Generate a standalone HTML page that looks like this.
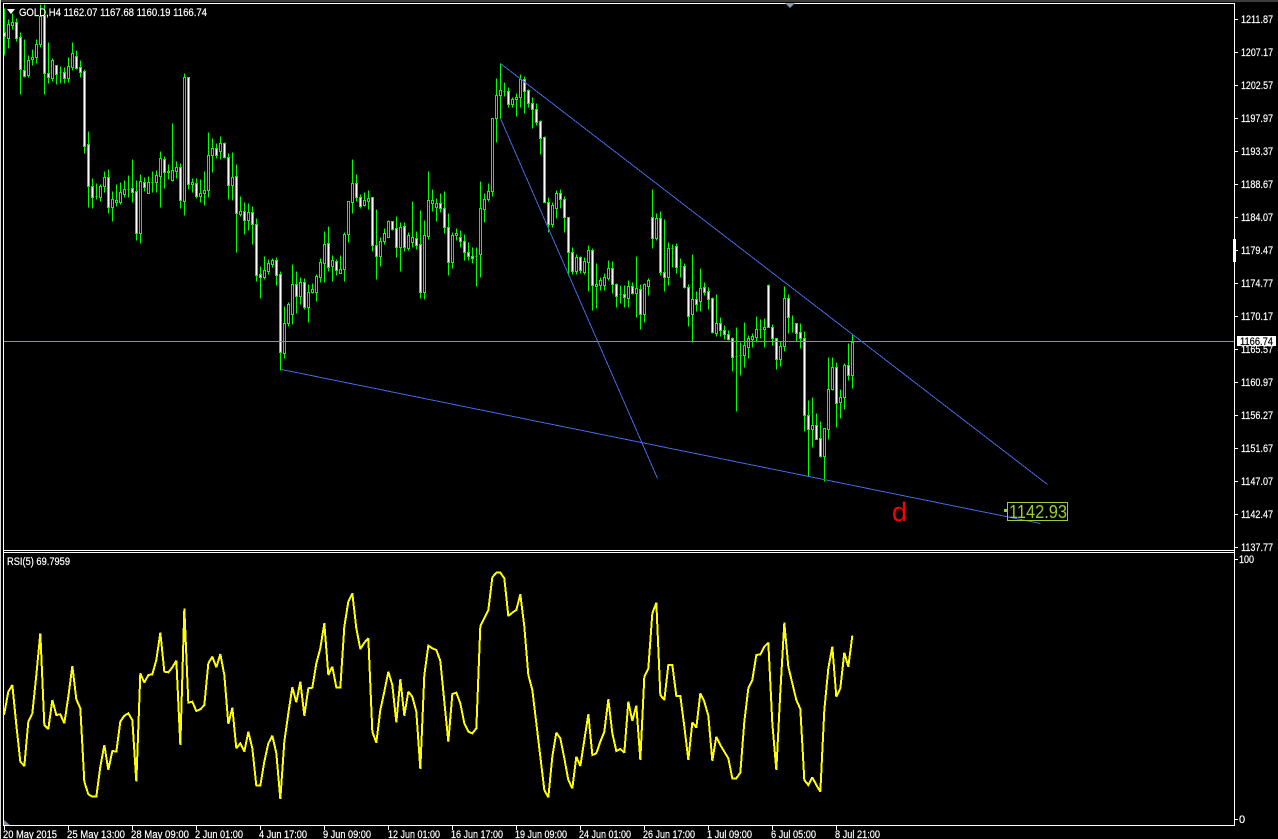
<!DOCTYPE html>
<html lang="en">
<head>
<meta charset="utf-8">
<title>GOLD,H4</title>
<style>
html,body{margin:0;padding:0;background:#000;width:1278px;height:839px;overflow:hidden}
svg{display:block}
text{font-family:"Liberation Sans",sans-serif;font-size:11px;fill:#fff;stroke:#fff;stroke-width:.2}
</style>
</head>
<body>
<svg xmlns="http://www.w3.org/2000/svg" width="1278" height="839" viewBox="0 0 1278 839">
<rect width="1278" height="839" fill="#000"/>
<rect x="0" y="0" width="1278" height="2" fill="#3c3c3c"/>
<rect x="0" y="0" width="1" height="839" fill="#d8d8d8"/>

<g shape-rendering="crispEdges" transform="translate(.5 .5)">
<!-- wicks -->
<path fill="none" stroke="#0f0" d="M4 8V55M8 19V48M12 13V29M16 18V41M20 32V94M24 39V77M28 55V77M32 49V65M36 39V63M40 4V47M44 4V94M48 42V83M52 58V81M56 65V84M60 66V83M64 67V83M68 57V82M72 42V70M76 50V69M80 60V77M84 69V153M88 131V207M92 178V208M96 183V199M100 184V201M104 171V192M108 169V213M112 191V221M116 184V206M120 182V204M124 180V197M128 175V197M132 159V202M136 180V240M140 174V243M144 177V191M148 176V193M152 171V192M156 170V192M160 151V207M164 156V188M168 164V179M172 123V181M176 161V178M180 163V208M184 73V215M188 77V189M192 178V192M196 178V198M200 179V202M204 171V205M208 132V197M212 138V172M216 143V158M220 136V159M224 142V158M228 153V199M232 152V200M236 164V252M240 196V216M244 202V234M248 203V230M252 206V244M256 218V281M260 266V298M264 256V279M268 259V274M272 258V267M276 257V285M280 271V370M284 306V358M288 302V326M292 264V324M296 271V313M300 277V304M304 278V309M308 284V322M312 283V293M316 274V301M320 258V282M324 231V282M328 226V271M332 255V281M336 259V275M340 255V273M344 232V281M348 201V242M352 159V213M356 174V201M360 194V208M364 192V206M368 190V209M372 197V251M376 209V279M380 237V266M384 228V244M388 220V237M392 221V230M396 216V257M400 222V271M404 222V251M408 232V250M412 201V247M416 231V249M420 210V298M424 220V299M428 171V239M432 189V211M436 198V221M440 193V212M444 191V233M448 213V275M452 232V268M456 228V240M460 230V247M464 234V260M468 242V260M472 247V263M476 247V286M480 181V277M484 193V222M488 183V201M492 118V196M496 78V142M500 63V118M504 82V96M508 87V107M512 97V107M516 93V116M520 74V107M524 76V113M528 89V107M532 97V128M536 103V125M540 120V154M544 136V202M548 197V232M552 202V227M556 190V218M560 189V208M564 196V232M568 217V275M572 247V274M576 254V274M580 256V273M584 257V274M588 245V291M592 248V310M596 263V308M600 277V290M604 273V290M608 260V280M612 261V293M616 283V307M620 285V303M624 285V307M628 280V307M632 282V294M636 256V317M640 284V329M644 283V322M648 278V295M652 189V248M656 213V240M660 211V275M664 219V291M668 242V285M672 244V267M676 243V273M680 258V277M684 263V288M688 284V326M692 254V342M696 291V311M700 268V311M704 282V295M708 287V309M712 297V333M716 294V336M720 317V336M724 325V339M728 330V340M732 337V371M736 327V411M740 342V375M744 322V367M748 335V358M752 333V347M756 316V342M760 319V338M764 318V347M768 284V327M772 324V345M776 338V369M780 341V366M784 286V351M788 294V333M792 315V332M796 323V341M800 323V348M804 331V431M808 400V476M812 397V447M816 413V438M820 421V457M824 428V481M828 357V439M832 357V390M836 362V427M840 389V418M844 363V409M848 343V380M852 334V388"/>
<!-- doji -->
<path fill="none" stroke="#0f0" d="M59 72h2M95 196h2M127 189h2M151 182h2M503 91h2M619 294h2M671 248h2M679 266h2M735 356h2M739 355h2M759 329h2M791 323h2M475 256h2"/>
<!-- black bodies -->
<path fill="#000" stroke="#0f0" d="M7 24h2v14h-2zM11 22h2v3h-2zM27 60h2v15h-2zM31 57h2v2h-2zM35 44h2v13h-2zM39 16h2v28h-2zM51 60h2v18h-2zM67 66h2v12h-2zM71 53h2v14h-2zM99 186h2v11h-2zM103 177h2v9h-2zM111 199h2v8h-2zM115 200h2v2h-2zM119 192h2v10h-2zM123 189h2v5h-2zM139 181h2v52h-2zM147 182h2v11h-2zM155 175h2v7h-2zM159 158h2v18h-2zM167 171h2v1h-2zM171 170h2v10h-2zM175 167h2v4h-2zM183 77h2v124h-2zM191 182h2v2h-2zM199 193h2v3h-2zM203 190h2v3h-2zM207 155h2v35h-2zM211 148h2v7h-2zM219 143h2v8h-2zM231 177h2v8h-2zM239 211h2v3h-2zM247 212h2v8h-2zM263 270h2v7h-2zM267 263h2v8h-2zM271 260h2v4h-2zM283 323h2v30h-2zM287 304h2v19h-2zM291 284h2v30h-2zM299 282h2v14h-2zM307 292h2v15h-2zM311 289h2v3h-2zM315 276h2v16h-2zM319 262h2v15h-2zM323 244h2v19h-2zM331 260h2v6h-2zM339 269h2v4h-2zM343 234h2v35h-2zM347 201h2v33h-2zM351 183h2v19h-2zM363 200h2v5h-2zM367 198h2v3h-2zM379 241h2v15h-2zM383 233h2v8h-2zM387 221h2v16h-2zM399 227h2v20h-2zM407 235h2v13h-2zM411 237h2v5h-2zM423 235h2v57h-2zM427 200h2v36h-2zM431 200h2v3h-2zM435 203h2v4h-2zM451 235h2v27h-2zM455 233h2v2h-2zM479 208h2v46h-2zM483 199h2v10h-2zM487 191h2v8h-2zM491 118h2v73h-2zM495 95h2v23h-2zM499 90h2v5h-2zM511 99h2v5h-2zM515 97h2v2h-2zM519 79h2v18h-2zM551 205h2v19h-2zM555 193h2v15h-2zM575 257h2v14h-2zM583 261h2v11h-2zM587 250h2v12h-2zM595 284h2v2h-2zM599 280h2v5h-2zM603 277h2v8h-2zM607 268h2v10h-2zM627 286h2v12h-2zM635 288h2v5h-2zM643 284h2v30h-2zM647 280h2v6h-2zM655 218h2v20h-2zM667 248h2v29h-2zM691 299h2v15h-2zM699 288h2v13h-2zM715 323h2v10h-2zM743 345h2v10h-2zM747 338h2v9h-2zM751 336h2v3h-2zM755 329h2v8h-2zM763 327h2v2h-2zM779 346h2v13h-2zM783 298h2v48h-2zM811 425h2v4h-2zM823 428h2v28h-2zM827 389h2v40h-2zM831 367h2v22h-2zM839 397h2v5h-2zM843 365h2v32h-2zM851 342h2v33h-2z"/>
<!-- white bodies -->
<path fill="#fff" stroke="#0f0" d="M3 32h2v4h-2zM15 22h2v16h-2zM19 37h2v32h-2zM23 70h2v6h-2zM43 15h2v58h-2zM47 73h2v4h-2zM55 65h2v9h-2zM63 72h2v6h-2zM75 56h2v12h-2zM79 67h2v5h-2zM83 71h2v75h-2zM87 144h2v42h-2zM91 186h2v11h-2zM107 177h2v30h-2zM131 188h2v4h-2zM135 191h2v42h-2zM143 182h2v5h-2zM163 159h2v13h-2zM179 167h2v33h-2zM187 77h2v107h-2zM195 183h2v13h-2zM215 148h2v7h-2zM223 143h2v14h-2zM227 157h2v28h-2zM235 176h2v37h-2zM243 211h2v9h-2zM251 212h2v12h-2zM255 224h2v51h-2zM259 274h2v3h-2zM275 260h2v15h-2zM279 274h2v78h-2zM295 284h2v12h-2zM303 282h2v25h-2zM327 243h2v24h-2zM335 261h2v9h-2zM355 183h2v14h-2zM359 197h2v9h-2zM371 197h2v48h-2zM375 245h2v11h-2zM391 221h2v8h-2zM395 228h2v19h-2zM403 226h2v21h-2zM415 238h2v7h-2zM419 244h2v48h-2zM439 203h2v5h-2zM443 208h2v19h-2zM447 227h2v35h-2zM459 237h2v4h-2zM463 241h2v11h-2zM467 252h2v4h-2zM471 256h2v2h-2zM507 91h2v13h-2zM523 79h2v12h-2zM527 90h2v13h-2zM531 103h2v6h-2zM535 109h2v13h-2zM539 121h2v17h-2zM543 137h2v65h-2zM547 202h2v22h-2zM559 193h2v6h-2zM563 199h2v18h-2zM567 217h2v35h-2zM571 252h2v19h-2zM579 257h2v13h-2zM591 250h2v35h-2zM611 268h2v16h-2zM615 284h2v12h-2zM623 294h2v3h-2zM631 286h2v7h-2zM639 289h2v25h-2zM651 217h2v21h-2zM659 218h2v54h-2zM663 272h2v5h-2zM675 246h2v21h-2zM683 266h2v21h-2zM687 287h2v29h-2zM695 299h2v5h-2zM703 287h2v5h-2zM707 291h2v8h-2zM711 298h2v34h-2zM719 323h2v7h-2zM723 330h2v4h-2zM727 334h2v5h-2zM731 338h2v19h-2zM767 285h2v42h-2zM771 327h2v11h-2zM775 338h2v21h-2zM787 298h2v19h-2zM795 323h2v10h-2zM799 332h2v6h-2zM803 338h2v77h-2zM807 415h2v14h-2zM815 425h2v14h-2zM819 438h2v18h-2zM835 367h2v36h-2zM847 365h2v10h-2z"/>
</g>

<!-- current price line -->
<rect x="4" y="341" width="1230" height="1" fill="#8c9099"/>

<!-- trend lines -->
<g shape-rendering="crispEdges" fill="none" stroke="#4169e1" stroke-width="1">
<line x1="500.5" y1="63.5" x2="1047.5" y2="484.5"/>
<line x1="500.5" y1="118.5" x2="657.5" y2="478.5"/>
<line x1="281.5" y1="369.5" x2="1040.5" y2="523.5"/>
</g>

<!-- frame -->
<g fill="#fff" shape-rendering="crispEdges">
<rect x="3" y="3" width="1232" height="1"/>
<rect x="3" y="3" width="1" height="823"/>
<rect x="1234" y="3" width="1" height="823"/>
<rect x="3" y="550" width="1232" height="1"/>
<rect x="3" y="552" width="1232" height="1"/>
<rect x="3" y="825" width="1232" height="1"/>
<rect x="1233" y="239" width="3" height="23"/>
<!-- right ticks -->
<path d="M1235 19h3v1h-3zM1235 52h3v1h-3zM1235 85h3v1h-3zM1235 118h3v1h-3zM1235 151h3v1h-3zM1235 184h3v1h-3zM1235 217h3v1h-3zM1235 250h3v1h-3zM1235 283h3v1h-3zM1235 316h3v1h-3zM1235 349h3v1h-3zM1235 382h3v1h-3zM1235 415h3v1h-3zM1235 448h3v1h-3zM1235 481h3v1h-3zM1235 514h3v1h-3zM1235 547h3v1h-3zM1235 559h3v1h-3zM1235 819h3v1h-3z"/>
<!-- bottom ticks -->
<path d="M4 826h1v4h-1zM68 826h1v4h-1zM132 826h1v4h-1zM196 826h1v4h-1zM260 826h1v4h-1zM324 826h1v4h-1zM388 826h1v4h-1zM452 826h1v4h-1zM516 826h1v4h-1zM580 826h1v4h-1zM644 826h1v4h-1zM708 826h1v4h-1zM772 826h1v4h-1zM836 826h1v4h-1z"/>
</g>

<!-- markers -->
<polygon points="785,3 795,3 790,8" fill="#8a98a8"/>
<polygon points="4,820 4,825 10,825" fill="#778899"/>
<polygon points="7,9 15,9 11,14" fill="#fff"/>

<!-- title -->
<text x="19" y="16" textLength="188" lengthAdjust="spacingAndGlyphs">GOLD,H4 1162.07 1167.68 1160.19 1166.74</text>
<text x="7" y="565" textLength="63" lengthAdjust="spacingAndGlyphs">RSI(5) 69.7959</text>

<!-- price axis -->
<g>
<text x="1241" y="23" textLength="32" lengthAdjust="spacingAndGlyphs">1211.87</text>
<text x="1241" y="56" textLength="32" lengthAdjust="spacingAndGlyphs">1207.17</text>
<text x="1241" y="89" textLength="32" lengthAdjust="spacingAndGlyphs">1202.57</text>
<text x="1241" y="122" textLength="32" lengthAdjust="spacingAndGlyphs">1197.97</text>
<text x="1241" y="155" textLength="32" lengthAdjust="spacingAndGlyphs">1193.37</text>
<text x="1241" y="188" textLength="32" lengthAdjust="spacingAndGlyphs">1188.67</text>
<text x="1241" y="221" textLength="32" lengthAdjust="spacingAndGlyphs">1184.07</text>
<text x="1241" y="254" textLength="32" lengthAdjust="spacingAndGlyphs">1179.47</text>
<text x="1241" y="287" textLength="32" lengthAdjust="spacingAndGlyphs">1174.77</text>
<text x="1241" y="320" textLength="32" lengthAdjust="spacingAndGlyphs">1170.17</text>
<text x="1241" y="353" textLength="32" lengthAdjust="spacingAndGlyphs">1165.57</text>
<text x="1241" y="386" textLength="32" lengthAdjust="spacingAndGlyphs">1160.97</text>
<text x="1241" y="419" textLength="32" lengthAdjust="spacingAndGlyphs">1156.27</text>
<text x="1241" y="452" textLength="32" lengthAdjust="spacingAndGlyphs">1151.67</text>
<text x="1241" y="485" textLength="32" lengthAdjust="spacingAndGlyphs">1147.07</text>
<text x="1241" y="518" textLength="32" lengthAdjust="spacingAndGlyphs">1142.47</text>
<text x="1241" y="551" textLength="32" lengthAdjust="spacingAndGlyphs">1137.77</text>
<text x="1239" y="563" textLength="15" lengthAdjust="spacingAndGlyphs">100</text>
<text x="1239" y="823">0</text>
</g>
<rect x="1237" y="336" width="39" height="10" fill="#fff"/>
<text x="1240" y="345" textLength="33" lengthAdjust="spacingAndGlyphs" style="fill:#000;stroke:#000">1166.74</text>

<!-- time axis -->
<g>
<text x="3" y="838" textLength="54" lengthAdjust="spacingAndGlyphs">20 May 2015</text>
<text x="67" y="838" textLength="58" lengthAdjust="spacingAndGlyphs">25 May 13:00</text>
<text x="131" y="838" textLength="58" lengthAdjust="spacingAndGlyphs">28 May 09:00</text>
<text x="195" y="838" textLength="48" lengthAdjust="spacingAndGlyphs">2 Jun 01:00</text>
<text x="259" y="838" textLength="48" lengthAdjust="spacingAndGlyphs">4 Jun 17:00</text>
<text x="323" y="838" textLength="48" lengthAdjust="spacingAndGlyphs">9 Jun 09:00</text>
<text x="388" y="838" textLength="52" lengthAdjust="spacingAndGlyphs">12 Jun 01:00</text>
<text x="451" y="838" textLength="52" lengthAdjust="spacingAndGlyphs">16 Jun 17:00</text>
<text x="515" y="838" textLength="52" lengthAdjust="spacingAndGlyphs">19 Jun 09:00</text>
<text x="579" y="838" textLength="52" lengthAdjust="spacingAndGlyphs">24 Jun 01:00</text>
<text x="643" y="838" textLength="52" lengthAdjust="spacingAndGlyphs">26 Jun 17:00</text>
<text x="707" y="838" textLength="45" lengthAdjust="spacingAndGlyphs">1 Jul 09:00</text>
<text x="771" y="838" textLength="45" lengthAdjust="spacingAndGlyphs">6 Jul 05:00</text>
<text x="835" y="838" textLength="45" lengthAdjust="spacingAndGlyphs">8 Jul 21:00</text>
</g>

<!-- annotations -->
<text x="892" y="521" style="font-size:27px;fill:#f00;stroke:none">d</text>
<rect x="1007.5" y="502.5" width="60" height="18" fill="#000" fill-opacity="0" stroke="#9acd32" shape-rendering="crispEdges"/>
<rect x="1004" y="509" width="3" height="3" fill="#9acd32"/>
<text x="1009" y="518" textLength="58" lengthAdjust="spacingAndGlyphs" style="font-size:18px;fill:#9acd32;stroke:none">1142.93</text>

<!-- RSI -->
<g fill="none" stroke="#ff0" stroke-width="6" stroke-linejoin="miter" stroke-miterlimit="2" shape-rendering="crispEdges">
<polyline transform="translate(0 550) scale(.33333)" points="12,495 25,425 37,405 49,525 61,635 73,648 85,515 97,490 109,375 121,250 133,525 145,537 157,450 169,495 181,493 193,520 205,440 217,348 229,448 241,475 253,695 265,733 277,740 289,740 301,650 313,585 325,660 337,603 349,605 361,515 373,497 385,490 397,510 409,695 421,370 433,398 445,375 457,373 469,330 481,248 493,365 505,367 517,352 529,332 541,585 553,175 565,458 577,455 589,483 601,478 613,465 625,340 637,320 649,352 661,312 673,375 685,522 697,473 709,595 721,580 733,605 745,545 757,595 769,707 781,707 793,635 805,580 817,557 829,610 841,747 853,575 865,490 877,412 889,457 901,395 913,497 925,415 937,413 949,340 961,295 973,220 985,375 997,350 1009,412 1021,412 1033,230 1045,155 1057,130 1069,235 1081,297 1093,278 1105,265 1117,545 1129,578 1141,480 1153,425 1165,365 1177,405 1189,517 1201,388 1213,497 1225,425 1237,440 1249,485 1261,657 1273,375 1285,287 1297,295 1309,300 1321,333"/>
<polyline transform="translate(440 550) scale(.33333)" points="1,333 13,455 25,575 37,432 49,428 61,460 73,520 85,545 97,550 109,535 121,228 133,205 145,180 157,82 169,68 181,68 193,85 205,198 217,188 229,180 241,133 253,230 265,375 277,420 289,520 301,620 313,720 325,742 337,620 349,548 361,565 373,625 385,690 397,715 409,620 421,648 433,570 445,493 457,615 469,610 481,575 493,545 505,448 517,550 529,603 541,597 553,608 565,455 577,513 589,467 601,630 613,380 625,355 637,190 649,158 661,435 673,450 685,345 697,345 709,438 721,438 733,530 745,630 757,517 769,533 781,430 793,455 805,497 817,632 829,560 841,585 853,605 865,625 877,685 889,685 901,668 913,515 925,415 937,390 949,315 961,313 973,290 985,278 997,520 1009,660 1021,425 1033,218 1045,350 1057,400 1069,450 1081,477 1093,690 1105,705 1117,682 1129,705 1141,725 1153,480 1165,355 1177,290 1189,440 1201,415 1213,308 1225,350 1237,257"/>
</g>
</svg>
</body>
</html>
